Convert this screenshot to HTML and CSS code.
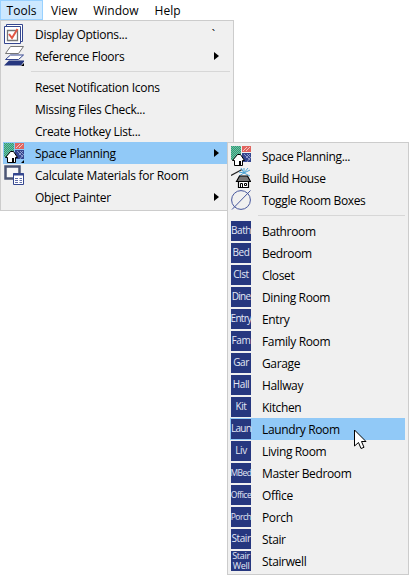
FILE: index.html
```
<!DOCTYPE html>
<html lang="en">
<head>
    <meta charset="UTF-8">
    <meta name="viewport" content="width=device-width, initial-scale=1.0">
    <title>Tools</title>
    <link rel="stylesheet" href="styles.css">
</head>
<body>
    <svg class="defs" width="0" height="0">
        <defs>
            <pattern id="green" width="2" height="2" patternUnits="userSpaceOnUse">
                <rect width="2" height="2" fill="#2f9c78"/>
                <path d="M0 1.500h1M1 .5h1" stroke="#6fc0a2"/>
            </pattern>
            <symbol id="planning" viewBox="0 0 20 20">
                <rect x="0" y="0" width="10" height="14" fill="url(#green)"/>
                <rect x="11" y="0" width="9" height="6" fill="#e0655f"/>
                <path d="M12 5l4-4M15 5l4-4" stroke="#f3c5c3"/>
                <rect x="11" y="7" width="9" height="9" fill="#34468f"/>
                <path d="M13 8l6 6M16 8l4 4M19 8l-4 4M19 12l-3 4" stroke="#a3afd9" stroke-width=".8"/>
                <path d="M3.500 19.500v-5h-2l5-6h3l4 6h-2v5z" fill="#fff" stroke="#000"/>
                <path d="M8 15h2v4H8z"/>
            </symbol>
        </defs>
    </svg>
    <nav class="menubar">
        <span class="tab active">Tools</span>
        <span class="tab">View</span>
        <span class="tab">Window</span>
        <span class="tab">Help</span>
    </nav>
    <div class="menu tools">
        <div class="item">
            <svg class="icon" viewBox="0 0 20 20">
                <path d="M2.500 .5h16v17h-16z" fill="#fff" stroke="#34468f"/>
                <path d="M.5 2.500h16v17H.5z" fill="#fff" stroke="#34468f"/>
                <path d="M3.500 6.500h10v10h-10z" fill="#fff" stroke="#777" stroke-width="1.300"/>
                <path d="M5 10l3 4 5.500-9" fill="none" stroke="#e25745" stroke-width="2"/>
            </svg>
            <span class="label">Display Options...</span>
            <span class="key">`</span>
        </div>
        <div class="item">
            <svg class="icon" viewBox="0 0 20 20">
                <path d="M0 19.500l5-5h15v1l-3 4z" fill="#26377f"/>
                <path d="M1.500 13.500l5-4.500h13l-5 4.500z" fill="#fff" stroke="#34468f"/>
                <path d="M1.500 7.500l5-7h13l-5 7z" fill="#fff" stroke="#777"/>
                <path d="M20 17v3h-3z" fill="#000"/>
            </svg>
            <span class="label">Reference Floors</span>
            <i class="arrow"></i>
        </div>
        <div class="line"></div>
        <div class="item"><i class="icon"></i><span class="label">Reset Notification Icons</span></div>
        <div class="item"><i class="icon"></i><span class="label">Missing Files Check...</span></div>
        <div class="item"><i class="icon"></i><span class="label">Create Hotkey List...</span></div>
        <div class="item selected">
            <svg class="icon"><use href="#planning"/><path d="M20 17v3h-3z" fill="#000"/></svg>
            <span class="label">Space Planning</span>
            <i class="arrow"></i>
        </div>
        <div class="item">
            <svg class="icon" viewBox="0 0 20 20">
                <path d="M1.500 1.500h14v12h-14z" fill="#f7f7f7" stroke="#4b5575" stroke-width="2.500"/>
                <path d="M9.500 8.500h10v11h-10z" fill="#fff" stroke="#34468f"/>
                <path d="M9 9.500h11" stroke="#34468f" stroke-width="2"/>
                <path d="M11 13.500h3M11 15.500h3M11 17.500h3M15.500 13.500h2.500M15.500 15.500h2.500M15.500 17.500h2.500" stroke="#5f6da8"/>
            </svg>
            <span class="label">Calculate Materials for Room</span>
        </div>
        <div class="item"><i class="icon"></i><span class="label">Object Painter</span><i class="arrow"></i></div>
    </div>
    <div class="menu rooms">
        <div class="item">
            <svg class="icon"><use href="#planning"/></svg>
            <span class="label">Space Planning...</span>
        </div>
        <div class="item">
            <svg class="icon" viewBox="0 0 20 20">
                <path d="M0 7.500l11-6" stroke="#222" stroke-width="1.200"/>
                <path d="M13 5l-3-5M13 5V0M13 5l4-5M13 5l6-3M13 5l6 3M13 5L8 8M13 5l-5-1" stroke="#4aa3d3"/>
                <path d="M7.500 19.500v-6h10v6z" fill="#fff" stroke="#000" stroke-width="1.200"/>
                <path d="M5.500 13.500l3-5.500h8l3 5.500z" fill="#777" stroke="#000" stroke-width="1.200"/>
                <path d="M9.500 19v-3.500h2V19M13.500 15.500h2v2h-2z" fill="none" stroke="#000"/>
            </svg>
            <span class="label">Build House</span>
        </div>
        <div class="item">
            <svg class="icon" viewBox="0 0 20 20">
                <circle cx="10" cy="10" r="9.400" fill="none" stroke="#46569c"/>
                <path d="M1 19.500L19.500 .5" stroke="#46569c"/>
            </svg>
            <span class="label">Toggle Room Boxes</span>
        </div>
        <div class="line"></div>
        <div class="item"><span class="icon room">Bath</span><span class="label">Bathroom</span></div>
        <div class="item"><span class="icon room">Bed</span><span class="label">Bedroom</span></div>
        <div class="item"><span class="icon room">Clst</span><span class="label">Closet</span></div>
        <div class="item"><span class="icon room tight">Dine</span><span class="label">Dining Room</span></div>
        <div class="item"><span class="icon room tight">Entry</span><span class="label">Entry</span></div>
        <div class="item"><span class="icon room">Fam</span><span class="label">Family Room</span></div>
        <div class="item"><span class="icon room">Gar</span><span class="label">Garage</span></div>
        <div class="item"><span class="icon room">Hall</span><span class="label">Hallway</span></div>
        <div class="item"><span class="icon room">Kit</span><span class="label">Kitchen</span></div>
        <div class="item selected">
            <span class="icon room tight">Laun</span><span class="label">Laundry Room</span>
            <svg class="cursor" viewBox="0 0 13 21">
                <path d="M.5 1v16l4-3.500 2.500 6 3-1.200-2.500-5.800H12z" fill="#fff" stroke="#000"/>
            </svg>
        </div>
        <div class="item"><span class="icon room">Liv</span><span class="label">Living Room</span></div>
        <div class="item"><span class="icon room small">MBed</span><span class="label">Master Bedroom</span></div>
        <div class="item"><span class="icon room small">Office</span><span class="label">Office</span></div>
        <div class="item"><span class="icon room small">Porch</span><span class="label">Porch</span></div>
        <div class="item"><span class="icon room">Stair</span><span class="label">Stair</span></div>
        <div class="item">
            <span class="icon room double"><span>Stair</span><span>Well</span></span>
            <span class="label">Stairwell</span>
        </div>
    </div>
</body>
</html>
```
FILE: styles.css
```
body {
    margin: 0;
    height: 575px;
    position: relative;
    overflow: hidden;
    background: #fff;
    color: #000;
    font-family: "Open Sans", "Noto Sans", sans-serif;
    font-size: 12px;
}
.defs {
    position: absolute;
}
.menubar {
    display: flex;
    height: 20px;
    line-height: 21px;
}
.tab {
    padding: 0 8px;
}
.tab.active {
    width: 43px;
    padding: 0;
    text-align: center;
    background: #cce8ff;
    box-shadow: inset 0 0 0 1px #99d1ff;
}
.menu {
    box-sizing: border-box;
    background: #f0f0f0;
    border: 1px solid #ccc;
    padding: 2px 3px 2px 2px;
}
.tools {
    width: 234px;
    height: 191px;
}
/* submenu opens over the right edge of the main menu */
.rooms {
    position: absolute;
    left: 227px;
    top: 142px;
    width: 182px;
    height: 433px;
}
.item {
    position: relative;
    display: flex;
    align-items: center;
    height: 22px;
    padding-left: 1px;
}
.item.selected {
    background: #91c9f7;
}
.icon {
    flex: none;
    width: 20px;
    height: 20px;
    margin-right: 11px;
}
.label {
    flex: 1;
    white-space: nowrap;
    letter-spacing: -0.28px;
}
.rooms .label {
    letter-spacing: -0.36px;
}
.key {
    margin-right: 15px;
}
.arrow {
    border: 4px solid transparent;
    border-left: 5px solid #000;
    border-right: 0;
    margin-right: 11px;
}
.line {
    height: 9px;
    margin: 0 0 0 28px;
    background: linear-gradient(#d7d7d7, #d7d7d7) 0 4px / 100% 1px no-repeat;
}
.room {
    display: flex;
    justify-content: center;
    background: #26377f;
    color: #e4e8f6;
    font-size: 10px;
    line-height: 19px;
    letter-spacing: -0.4px;
    white-space: nowrap;
}
.room.tight {
    font-size: 10px;
    letter-spacing: -0.7px;
}
.room.small {
    font-size: 8.5px;
    letter-spacing: -0.5px;
}
.room.double {
    flex-direction: column;
    align-items: center;
    font-size: 9px;
    line-height: 10px;
    letter-spacing: -0.3px;
}
.cursor {
    position: absolute;
    left: 124px;
    top: 11px;
    width: 13px;
    height: 21px;
    z-index: 1;
}
```
